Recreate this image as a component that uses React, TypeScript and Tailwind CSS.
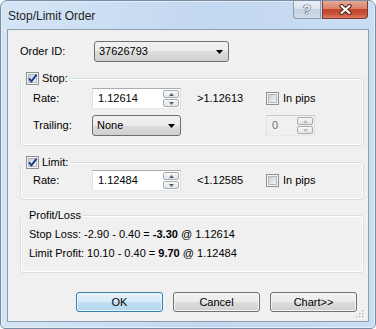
import React from "react";

const btnFace =
  "bg-[linear-gradient(#f2f2f2,#ebebeb_50%,#dddddd_50%,#cfcfcf)] border border-[#707070] rounded-[3px]";

function CheckBox({ checked = false }: { checked?: boolean }) {
  return (
    <span className="relative flex h-[13px] w-[13px] shrink-0 items-center justify-center border border-[#8e8f8f] bg-[#f4f4f4]">
      <span className="h-[9px] w-[9px] border border-[#b4b9bf] bg-[linear-gradient(135deg,#c9ced4,#f6f6f6)]" />
      {checked && (
        <svg className="absolute left-[-1px] top-[-1px]" width="13" height="13" viewBox="0 0 13 13">
          <path d="M3 6.3 L5.4 9.4 L10.6 2.6" fill="none" stroke="#1f3c8f" strokeWidth="1.9" />
        </svg>
      )}
    </span>
  );
}

function SpinBtn({ up, disabled }: { up?: boolean; disabled?: boolean }) {
  const c = disabled ? "#b7bcc2" : "#4d6185";
  return (
    <span className="flex flex-1 items-center justify-center rounded-[2px] border border-[#a9adb2] bg-[linear-gradient(#f7f7f7,#e4e4e4)]">
      <svg width="5" height="3" viewBox="0 0 5 3">
        <path d={up ? "M0 3h5L2.5 0z" : "M0 0h5L2.5 3z"} fill={c} />
      </svg>
    </span>
  );
}

function SpinBox({ value, width, disabled }: { value: string; width: string; disabled?: boolean }) {
  return (
    <div
      className={`flex h-[21px] items-stretch border border-[#abadb3] border-x-[#dbdfe6] border-b-[#e3e9ef] pl-[5px] pr-[1px] ${width} ${
        disabled ? "bg-[#f0f0f0] text-[#6d6d6d] border-[#c5c9cd]" : "bg-white text-black"
      }`}
    >
      <span className="flex flex-1 items-center">{value}</span>
      <span className="flex w-[16px] flex-col gap-[1px] py-[1px]">
        <SpinBtn up disabled={disabled} />
        <SpinBtn disabled={disabled} />
      </span>
    </div>
  );
}

function Combo({ value, width }: { value: string; width: string }) {
  return (
    <div className={`flex h-[21px] items-center pl-[4px] pr-[5px] ${btnFace} ${width}`}>
      <span className="flex-1">{value}</span>
      <svg width="7" height="4" viewBox="0 0 7 4">
        <path d="M0 0h7L3.5 4z" fill="#000" />
      </svg>
    </div>
  );
}

function Group({ legend, className, children }: { legend: React.ReactNode; className: string; children: React.ReactNode }) {
  return (
    <fieldset
      className={`ml-[12px] mr-[4px] rounded-[3px] border border-[#d5dfe5] shadow-[inset_0_0_0_1px_#ffffff] ${className}`}
    >
      <legend className="flex h-[13px] items-center bg-[#f0f0f0]">{legend}</legend>
      {children}
    </fieldset>
  );
}

function RateRow({ rate, limit }: { rate: string; limit: string }) {
  return (
    <div className="flex h-[21px] items-center pl-[12px]">
      <span className="w-[59px]">Rate:</span>
      <SpinBox value={rate} width="w-[89px]" />
      <span className="ml-[16px] w-[69px]">{limit}</span>
      <CheckBox />
      <span className="ml-[4px]">In pips</span>
    </div>
  );
}

function Button({ label, primary }: { label: string; primary?: boolean }) {
  return (
    <div
      className={`flex h-[20px] w-[87px] items-center justify-center rounded-[3px] border ${
        primary
          ? "border-[#3c7fb1] bg-[linear-gradient(#e6f2fb,#d6eaf8_50%,#c2dff3_50%,#b3d6ee)] shadow-[inset_0_0_0_1px_#e9f5fd]"
          : `${btnFace} shadow-[inset_0_0_0_1px_#f6f6f6]`
      }`}
    >
      {label}
    </div>
  );
}

function Grip() {
  const dots = [
    [8, 2],
    [5, 5],
    [8, 5],
    [2, 8],
    [5, 8],
    [8, 8],
  ];
  return (
    <svg className="absolute bottom-[2px] right-[3px]" width="10" height="10" viewBox="0 0 10 10">
      {dots.map(([x, y], i) => (
        <g key={i}>
          <rect x={x} y={y} width="1.5" height="1.5" fill="#ffffff" />
          <rect x={x - 1} y={y - 1} width="1.5" height="1.5" fill="#b4b8bd" />
        </g>
      ))}
    </svg>
  );
}

export default function App() {
  return (
    <div className="h-[329px] w-[376px] font-['Liberation_Sans',Arial,sans-serif] text-[11px] leading-[13px] text-black">
      <div className="flex h-[329px] w-[376px] flex-col rounded-t-[7px] rounded-b-[5px] border border-[#7a8ca3] bg-[linear-gradient(to_right,#d6e5f6,#c2d8f0_55%,#cadef3)] px-[6px] pb-[6px] shadow-[inset_0_0_0_1px_#e4eef9]">
        {/* title bar */}
        <div className="flex h-[28px] items-start">
          <span className="mt-[8px] pl-[1px] text-[12px] leading-[14px] text-[#1e1e1e]">Stop/Limit Order</span>
          <div className="ml-auto mr-[1px] flex gap-[1px]">
            <div className="flex h-[18px] w-[28px] items-center justify-center rounded-bl-[4px] border border-t-0 border-[#8a9bb1] bg-[linear-gradient(#e9eff6,#dbe4ee_45%,#c5d2e1_50%,#d2dce8)]">
              <span className="text-[13px] font-bold leading-[13px] text-white [text-shadow:0_0_1px_#2d3a4a,0_0_1px_#2d3a4a,0_0_1px_#2d3a4a]">
                ?
              </span>
            </div>
            <div className="flex h-[18px] w-[46px] items-center justify-center rounded-br-[4px] border border-t-0 border-[#7b3b30] bg-[linear-gradient(#e9a897,#d9826c_45%,#c4452c_50%,#c9503a_75%,#df7b60)]">
              <svg width="13" height="11" viewBox="0 0 13 11">
                <path d="M2.5 2 L10.5 9 M10.5 2 L2.5 9" stroke="#4b1d15" strokeWidth="4.2" strokeLinecap="round" />
                <path d="M2.5 2 L10.5 9 M10.5 2 L2.5 9" stroke="#ffffff" strokeWidth="2.2" strokeLinecap="round" />
              </svg>
            </div>
          </div>
        </div>

        {/* client area */}
        <div className="relative flex flex-1 flex-col border border-[#8e9db1] bg-[#f0f0f0]">
          <div className="mt-[11px] flex h-[21px] items-center pl-[12px]">
            <span className="w-[74px]">Order ID:</span>
            <Combo value="37626793" width="w-[135px]" />
          </div>

          <Group
            className="mt-[10px] pb-[9px] pt-[3px]"
            legend={
              <span className="ml-[4px] flex items-center px-[1px]">
                <CheckBox checked />
                <span className="ml-[3px] pr-[1px]">Stop:</span>
              </span>
            }
          >
            <RateRow rate="1.12614" limit=">1.12613" />
            <div className="mt-[6px] flex h-[21px] items-center pl-[12px]">
              <span className="w-[59px]">Trailing:</span>
              <Combo value="None" width="w-[89px]" />
              <span className="ml-[85px]">
                <SpinBox value="0" width="w-[49px]" disabled />
              </span>
            </div>
          </Group>

          <Group
            className="mt-[10px] pb-[8px] pt-[1px]"
            legend={
              <span className="ml-[4px] flex items-center px-[1px]">
                <CheckBox checked />
                <span className="ml-[3px] pr-[1px]">Limit:</span>
              </span>
            }
          >
            <RateRow rate="1.12484" limit="<1.12585" />
          </Group>

          <Group
            className="mt-[9px] pb-[9px] pt-[3px]"
            legend={<span className="ml-[7px] px-[1px] leading-[13px]">Profit/Loss</span>}
          >
            <div className="pl-[8px] leading-[19px]">
              <div>
                Stop Loss: -2.90 - 0.40 = <b>-3.30</b> @ 1.12614
              </div>
              <div>
                Limit Profit: 10.10 - 0.40 = <b>9.70</b> @ 1.12484
              </div>
            </div>
          </Group>

          <div className="ml-[68px] mt-[19px] flex gap-[10px]">
            <Button label="OK" primary />
            <Button label="Cancel" />
            <Button label="Chart>>" />
          </div>

          <Grip />
        </div>
      </div>
    </div>
  );
}
